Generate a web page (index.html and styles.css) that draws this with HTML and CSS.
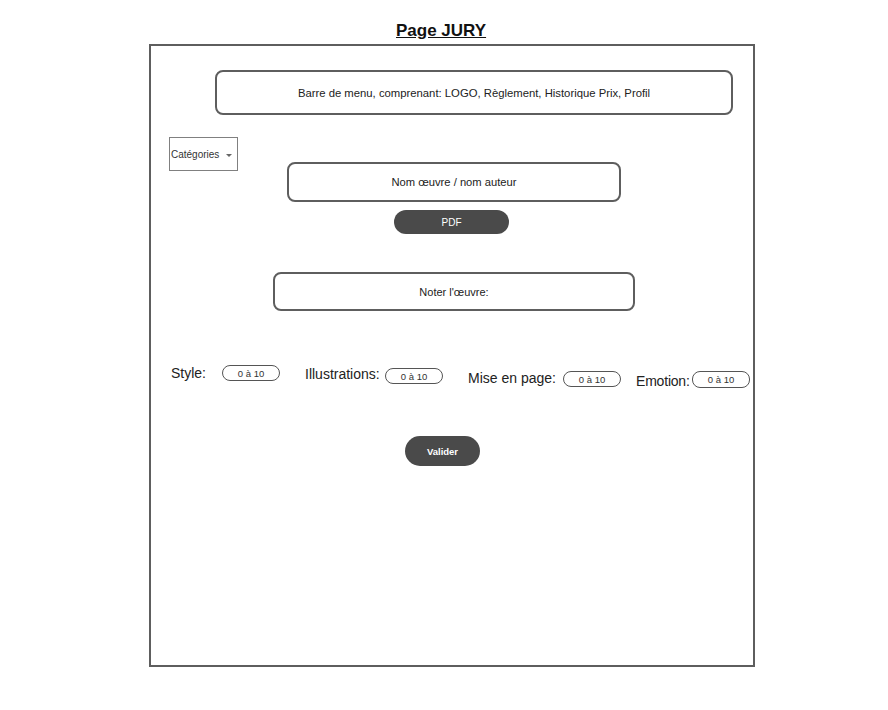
FILE: index.html
```html
<!DOCTYPE html>
<html lang="fr">
<head>
<meta charset="utf-8">
<title>Page JURY</title>
<link rel="stylesheet" href="styles.css">
</head>
<body>
  <h1 class="title">Page JURY</h1>
  <div class="frame">
    <div class="menu">Barre de menu, comprenant: LOGO, Règlement, Historique Prix, Profil</div>
    <div class="mid-row">
      <div class="categories">
        <span>Catégories</span>
        <span class="caret"></span>
      </div>
      <div class="work-col">
        <div class="work">Nom œuvre / nom auteur</div>
        <div class="btn btn-pdf">PDF</div>
      </div>
    </div>
    <div class="rate-box">Noter l'œuvre:</div>
    <div class="ratings">
      <span class="label label-style">Style:</span>
      <span class="pill pill-style">0 à 10</span>
      <span class="label label-illu">Illustrations:</span>
      <span class="pill pill-illu">0 à 10</span>
      <span class="label label-mise">Mise en page:</span>
      <span class="pill pill-mise">0 à 10</span>
      <span class="label label-emo">Emotion:</span>
      <span class="pill pill-emo">0 à 10</span>
    </div>
    <div class="btn btn-valider">Valider</div>
  </div>
</body>
</html>
```
FILE: styles.css
```css
* { box-sizing: border-box; }

body {
  margin: 0;
  background: #ffffff;
  font-family: "Liberation Sans", Arial, sans-serif;
  color: #222222;
}

.title {
  margin: 0;
  padding: 21px 0 0 396px;
  height: 44px;
  font-size: 17px;
  line-height: 20px;
  font-weight: bold;
  text-decoration: underline;
  color: #111111;
}

.frame {
  margin-left: 149px;
  width: 606px;
  height: 623px;
  border: 2px solid #5e5e5e;
}

.menu {
  margin: 24px 0 0 64px;
  width: 518px;
  height: 45px;
  border: 2px solid #5e5e5e;
  border-radius: 8px;
  display: flex;
  align-items: center;
  justify-content: center;
  font-size: 11.3px;
}

.mid-row {
  display: flex;
  align-items: flex-start;
}

.categories {
  margin: 22px 0 0 18px;
  width: 69px;
  height: 34px;
  border: 1px solid #808080;
  display: flex;
  align-items: center;
  padding-left: 1px;
  font-size: 10px;
  color: #333333;
}

.caret {
  margin-left: 7px;
  margin-top: 2px;
  width: 0;
  height: 0;
  border-left: 3px solid transparent;
  border-right: 3px solid transparent;
  border-top: 3px solid #666666;
}

.work-col {
  margin: 47px 0 0 49px;
}

.work {
  width: 334px;
  height: 40px;
  border: 2px solid #5e5e5e;
  border-radius: 8px;
  display: flex;
  align-items: center;
  justify-content: center;
  font-size: 11.2px;
}

.btn {
  display: flex;
  align-items: center;
  justify-content: center;
  background: #4a4a4a;
  color: #ffffff;
  font-size: 10px;
}

.btn-pdf {
  margin: 8px 0 0 107px;
  width: 115px;
  height: 24px;
  border-radius: 12px;
}

.rate-box {
  margin: 38px 0 0 122px;
  width: 362px;
  height: 39px;
  border: 2px solid #5e5e5e;
  border-radius: 8px;
  display: flex;
  align-items: center;
  justify-content: center;
  font-size: 11px;
}

.ratings {
  margin-top: 54px;
  height: 24px;
  display: flex;
  align-items: flex-start;
}

.label {
  font-size: 14px;
  line-height: 16px;
  color: #222222;
}

.pill {
  width: 58px;
  height: 16px;
  border: 1px solid #555555;
  border-radius: 8px;
  display: flex;
  align-items: center;
  justify-content: center;
  font-size: 9.5px;
  color: #333333;
}

.label-style { margin-left: 20px; width: 51px; margin-top: 0; }
.pill-style { margin-top: 0; }
.label-illu { margin-left: 25px; width: 80px; margin-top: 1px; }
.pill-illu { margin-top: 3px; }
.label-mise { margin-left: 25px; width: 95px; margin-top: 5px; }
.pill-mise { margin-top: 6px; }
.label-emo { margin-left: 15px; width: 56px; margin-top: 8px; letter-spacing: -0.2px; }
.pill-emo { margin-top: 6px; height: 17px; }

.btn-valider {
  margin: 47px 0 0 254px;
  width: 75px;
  height: 30px;
  border-radius: 15px;
  font-size: 9.5px;
  font-weight: bold;
}
```
